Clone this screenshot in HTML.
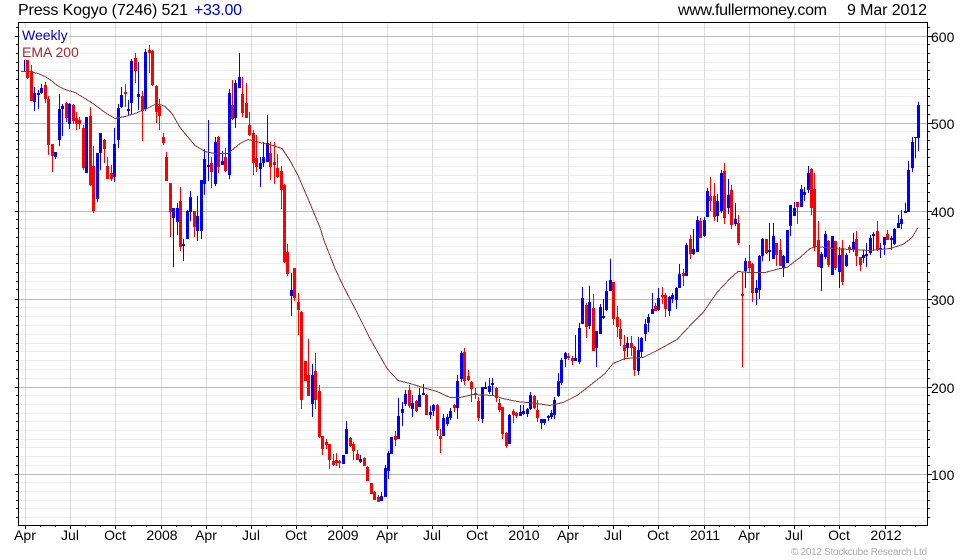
<!DOCTYPE html>
<html><head><meta charset="utf-8"><title>Press Kogyo</title>
<style>
html,body{margin:0;padding:0;background:#fff;width:980px;height:560px;overflow:hidden}
svg{display:block}
text{font-family:"Liberation Sans",Arial,sans-serif;font-size:14px;fill:#000}
.g{shape-rendering:crispEdges;fill:none}
.c{text-anchor:middle}
</style></head><body>
<svg width="980" height="560" viewBox="0 0 980 560">
<rect width="980" height="560" fill="#fff"/>
<path class="g" stroke="#eeeeee" d="M19 27.5H927M19 44.5H927M19 53.5H927M19 62.5H927M19 70.5H927M19 79.5H927M19 88.5H927M19 96.5H927M19 105.5H927M19 114.5H927M19 131.5H927M19 140.5H927M19 149.5H927M19 157.5H927M19 166.5H927M19 175.5H927M19 183.5H927M19 192.5H927M19 201.5H927M19 219.5H927M19 228.5H927M19 237.5H927M19 246.5H927M19 254.5H927M19 263.5H927M19 272.5H927M19 281.5H927M19 289.5H927M19 307.5H927M19 316.5H927M19 325.5H927M19 334.5H927M19 343.5H927M19 351.5H927M19 360.5H927M19 369.5H927M19 378.5H927M19 395.5H927M19 404.5H927M19 413.5H927M19 421.5H927M19 430.5H927M19 439.5H927M19 447.5H927M19 456.5H927M19 465.5H927M19 482.5H927M19 491.5H927M19 500.5H927M19 508.5H927M19 517.5H927"/>
<path class="g" stroke="#dddddd" d="M25.5 23V525M70.5 23V525M115.5 23V525M161.5 23V525M206.5 23V525M251.5 23V525M296.5 23V525M342.5 23V525M387.5 23V525M432.5 23V525M477.5 23V525M523.5 23V525M568.5 23V525M613.5 23V525M658.5 23V525M704.5 23V525M749.5 23V525M794.5 23V525M839.5 23V525M885.5 23V525"/>
<path class="g" stroke="#bbbbbb" d="M19 36.5H927M19 123.5H927M19 211.5H927M19 299.5H927M19 387.5H927M19 474.5H927"/>
<rect x="20" y="28" width="49" height="14" fill="#fff"/>
<rect x="20" y="44" width="59" height="15" fill="#fff"/>
<!-- red wicks -->
<path class="g" stroke="#ff0000" d="M27.5 60V79M31.5 65V101M45.5 82V103M48.5 96V155M52.5 144V172M66.5 102V122M73.5 104V124M76.5 112V130M79.5 117V129M83.5 125V170M90.5 107V186M93.5 146V213M104.5 139V163M107.5 157V179M111.5 165V181M125.5 84V107M135.5 53V83M142.5 91V141M149.5 45V73M152.5 50V86M156.5 85V123M159.5 99V130M163.5 133V145M166.5 152V181M170.5 183V237M180.5 187V251M194.5 211V237M211.5 157V188M218.5 136V173M225.5 148V172M232.5 80V120M242.5 77V117M246.5 83V118M249.5 112V136M253.5 130V175M256.5 135V172M270.5 142V180M274.5 142V184M277.5 154V178M281.5 166V209M284.5 184V263M287.5 244V276M294.5 268V301M298.5 293V335M301.5 311V409M305.5 361V381M308.5 339V396M315.5 353V409M319.5 385V438M322.5 436V455M326.5 439V449M329.5 444V469M333.5 454V466M336.5 453V466M339.5 460V468M350.5 437V447M353.5 442V460M357.5 450V460M364.5 457V466M367.5 466V481M371.5 483V494M374.5 491V500M378.5 495V502M395.5 431V446M409.5 385V408M416.5 400V412M426.5 394V415M437.5 404V436M440.5 429V453M454.5 404V412M464.5 348V385M468.5 370V381M471.5 381V402M475.5 388V399M478.5 397V421M496.5 387V402M499.5 399V412M502.5 407V439M506.5 432V448M513.5 409V423M516.5 412V418M534.5 395V409M537.5 400V422M568.5 353V360M572.5 356V365M586.5 303V338M593.5 294V351M613.5 282V325M617.5 306V337M620.5 319V346M624.5 335V360M631.5 336V356M634.5 346V376M655.5 303V311M662.5 287V304M665.5 293V317M683.5 269V286M690.5 235V259M700.5 218V238M710.5 177V211M714.5 183V221M724.5 163V224M731.5 185V229M738.5 215V245M742.5 272V367M749.5 245V272M752.5 263V302M766.5 239V254M776.5 243V266M780.5 239V266M797.5 202V224M811.5 168V215M814.5 173V251M818.5 221V267M828.5 240V267M835.5 241V270M842.5 240V285M849.5 245V253M856.5 231V266M860.5 257V271M877.5 221V251M887.5 230V240"/>
<!-- red bodies -->
<path class="g" stroke="#ff0000" stroke-width="3" d="M27.5 60V78M31.5 71V101M45.5 85V99M48.5 99V145M52.5 144V156M66.5 103V118M73.5 105V121M76.5 118V124M79.5 120V124M83.5 128V168M90.5 116V185M93.5 166V211M104.5 140V149M107.5 166V179M111.5 173V179M125.5 92V94M135.5 58V71M142.5 96V111M149.5 50V53M152.5 51V85M156.5 86V112M159.5 106V116M163.5 137V143M166.5 157V181M170.5 183V212M180.5 201V247M194.5 211V227M211.5 163V172M218.5 137V167M225.5 157V171M232.5 105V119M242.5 94V113M246.5 103V118M249.5 125V135M253.5 133V163M256.5 158V167M270.5 153V167M274.5 162V165M277.5 168V177M281.5 171V190M284.5 185V262M287.5 252V274M294.5 268V298M298.5 302V310M301.5 312V400M305.5 361V381M308.5 375V396M315.5 371V400M319.5 391V437M322.5 436V449M326.5 442V445M329.5 444V460M333.5 461V465M336.5 460V463M339.5 461V463M350.5 438V446M353.5 444V451M357.5 454V460M364.5 458V466M367.5 467V481M371.5 483V494M374.5 492V500M378.5 497V502M395.5 436V440M409.5 390V406M416.5 401V411M426.5 395V415M437.5 405V430M440.5 436V439M454.5 405V408M464.5 352V381M468.5 376V380M471.5 382V389M475.5 393V394M478.5 401V418M496.5 388V398M499.5 403V410M502.5 407V434M506.5 433V446M513.5 411V415M516.5 413V416M534.5 396V408M537.5 410V418M568.5 356V358M572.5 358V361M586.5 305V327M593.5 308V351M613.5 282V319M617.5 317V327M620.5 329V339M624.5 345V351M631.5 343V348M634.5 347V370M655.5 306V311M662.5 295V297M665.5 295V309M683.5 273V276M690.5 239V254M700.5 221V238M710.5 196V201M714.5 196V217M724.5 171V218M731.5 190V225M738.5 223V243M742.5 294V296M749.5 261V268M752.5 264V293M766.5 239V253M776.5 243V255M780.5 250V266M797.5 202V207M811.5 169V208M814.5 189V247M818.5 240V267M828.5 241V265M835.5 241V268M842.5 248V282M849.5 247V250M856.5 239V256M860.5 257V265M877.5 231V250M887.5 234V240"/>
<!-- blue wicks -->
<path class="g" stroke="#0000ff" d="M24.5 60V71M34.5 87V111M38.5 90V109M41.5 84V94M55.5 152V159M59.5 94V146M62.5 104V136M69.5 103V129M86.5 117V173M97.5 153V202M100.5 133V170M114.5 128V182M118.5 104V148M121.5 87V108M128.5 100V115M131.5 59V114M138.5 62V110M145.5 49V111M173.5 208V267M177.5 203V235M183.5 239V261M187.5 210V239M190.5 191V221M197.5 196V241M201.5 180V239M204.5 149V195M208.5 120V181M215.5 137V186M222.5 151V165M229.5 89V179M235.5 80V128M239.5 53V88M260.5 157V187M263.5 142V167M267.5 115V162M291.5 273V316M312.5 364V417M343.5 455V464M346.5 421V454M360.5 455V463M381.5 492V501M385.5 465V497M388.5 451V479M391.5 437V454M398.5 398V439M402.5 402V426M405.5 390V406M412.5 395V417M419.5 388V407M423.5 384V395M430.5 406V419M433.5 404V416M443.5 414V436M447.5 414V426M450.5 408V420M457.5 375V419M461.5 351V382M482.5 387V423M485.5 382V389M489.5 378V394M492.5 378V395M509.5 414V444M520.5 405V416M523.5 405V415M527.5 408V417M530.5 392V410M541.5 419V429M544.5 419V425M548.5 415V421M551.5 410V419M554.5 397V419M558.5 373V397M561.5 358V385M565.5 352V367M575.5 335V361M579.5 323V364M582.5 287V324M589.5 286V329M596.5 331V367M600.5 304V334M603.5 299V319M606.5 281V311M610.5 259V291M627.5 337V357M638.5 337V375M641.5 337V357M645.5 319V341M648.5 314V332M652.5 293V314M658.5 288V311M669.5 296V316M672.5 293V303M676.5 287V309M679.5 264V288M686.5 243V276M693.5 229V255M697.5 216V252M704.5 217V237M707.5 188V217M717.5 194V222M721.5 170V213M728.5 179V214M735.5 203V226M745.5 258V288M756.5 280V305M759.5 255V299M762.5 238V261M769.5 223V261M773.5 223V259M783.5 255V277M787.5 230V263M790.5 205V236M794.5 202V216M801.5 185V207M804.5 187V201M808.5 166V193M821.5 252V291M825.5 231V259M832.5 236V275M839.5 247V288M846.5 253V267M853.5 233V252M863.5 250V263M866.5 243V267M870.5 235V255M873.5 232V251M880.5 243V258M884.5 237V255M891.5 236V250M894.5 228V245M898.5 215V228M901.5 210V229M905.5 203V213M908.5 161V212M912.5 137V172M915.5 137V158M918.5 102V151"/>
<!-- blue bodies -->
<path class="g" stroke="#0000ff" stroke-width="3" d="M34.5 93V102M38.5 93V95M41.5 88V93M55.5 152V157M59.5 109V140M62.5 106V109M69.5 104V124M86.5 117V173M97.5 153V199M100.5 133V153M114.5 144V177M118.5 108V140M121.5 95V107M128.5 109V111M131.5 61V103M138.5 94V97M145.5 52V109M173.5 208V218M177.5 208V222M183.5 244V246M187.5 211V239M190.5 197V212M197.5 216V231M201.5 180V231M204.5 159V184M208.5 165V167M215.5 142V184M222.5 161V165M229.5 93V175M235.5 83V118M239.5 77V88M260.5 163V169M263.5 157V163M267.5 143V162M291.5 290V296M312.5 375V404M343.5 455V464M346.5 429V454M360.5 459V462M381.5 496V501M385.5 468V497M388.5 453V471M391.5 437V454M398.5 416V439M402.5 409V413M405.5 394V404M412.5 403V409M419.5 395V407M423.5 393V395M430.5 412V415M433.5 405V411M443.5 418V436M447.5 417V424M450.5 411V418M457.5 381V408M461.5 353V379M482.5 387V419M485.5 387V389M489.5 386V392M492.5 383V385M509.5 415V444M520.5 412V416M523.5 411V414M527.5 409V414M530.5 395V409M541.5 419V423M544.5 419V423M548.5 416V418M551.5 413V417M554.5 400V415M558.5 381V396M561.5 360V383M565.5 353V359M575.5 358V361M579.5 328V362M582.5 298V324M589.5 302V326M596.5 331V348M600.5 307V334M603.5 316V318M606.5 291V310M610.5 280V291M627.5 343V348M638.5 350V371M641.5 338V352M645.5 324V334M648.5 317V323M652.5 309V314M658.5 298V310M669.5 297V311M672.5 295V299M676.5 288V300M679.5 274V288M686.5 245V276M693.5 249V254M697.5 220V252M704.5 220V236M707.5 191V217M717.5 201V216M721.5 173V211M728.5 195V208M735.5 219V224M745.5 261V271M756.5 288V293M759.5 256V290M762.5 239V256M769.5 250V252M773.5 236V259M783.5 256V268M787.5 230V263M790.5 205V226M794.5 208V216M801.5 189V207M804.5 192V195M808.5 173V190M821.5 254V268M825.5 234V257M832.5 236V275M839.5 255V272M846.5 255V266M853.5 242V250M863.5 255V258M866.5 254V256M870.5 238V253M873.5 234V236M880.5 248V249M884.5 237V245M891.5 238V240M894.5 229V244M898.5 223V228M901.5 219V224M905.5 211V213M908.5 170V212M912.5 142V168M915.5 137V138M918.5 105V138"/>
<!-- EMA -->
<path fill="none" stroke="#993333" stroke-width="1" shape-rendering="crispEdges" d="M21 71.5L30 71.5L38 73.5L45 76.5L50 79.5L57 85.5L65 89.5L75 92.5L85 98.5L93 103.5L105 112.5L115 118.5L125 116.5L135 113.5L145 109.5L155 104.5L160 104.5L165 106.5L172 113.5L180 127.5L195 145.5L205 151.5L215 153.5L228 153.5L240 143.5L248 139.5L260 142.5L273 145.5L282 148.5L290 160.5L298 175.5L310 203.5L320 227.5L324 240.5L335 268.5L343 285.5L357 312.5L370 338.5L387 368.5L398 380.5L410 383.5L423 387.5L437 391.5L450 397.5L460 397.5L473 394.5L493 395.5L503 398.5L517 401.5L537 403.5L550 405.5L563 402.5L577 395.5L590 385.5L605 373.5L613 363.5L625 358.5L643 357.5L657 350.5L677 339.5L693 322.5L703 312.5L717 292.5L730 278.5L738 271.5L750 272.5L765 272.5L780 268.5L787 267.5L800 257.5L810 248.5L817 246.5L833 248.5L850 249.5L870 250.5L890 248.5L903 244.5L912 237.5L918 227.5"/>
<!-- frame -->
<path class="g" stroke="#000" d="M18.5 22.5H927.5V525.5H18.5Z"/>
<path class="g" stroke="#000" d="M15 36.5h3M15 123.5h3M15 211.5h3M15 299.5h3M15 387.5h3M15 474.5h3M928 36.5h4M928 123.5h4M928 211.5h4M928 299.5h4M928 387.5h4M928 474.5h4"/>
<path class="g" stroke="#000" d="M16 27.5h2M16 44.5h2M16 53.5h2M16 62.5h2M16 70.5h2M16 79.5h2M16 88.5h2M16 96.5h2M16 105.5h2M16 114.5h2M16 131.5h2M16 140.5h2M16 149.5h2M16 157.5h2M16 166.5h2M16 175.5h2M16 183.5h2M16 192.5h2M16 201.5h2M16 219.5h2M16 228.5h2M16 237.5h2M16 246.5h2M16 254.5h2M16 263.5h2M16 272.5h2M16 281.5h2M16 289.5h2M16 307.5h2M16 316.5h2M16 325.5h2M16 334.5h2M16 343.5h2M16 351.5h2M16 360.5h2M16 369.5h2M16 378.5h2M16 395.5h2M16 404.5h2M16 413.5h2M16 421.5h2M16 430.5h2M16 439.5h2M16 447.5h2M16 456.5h2M16 465.5h2M16 482.5h2M16 491.5h2M16 500.5h2M16 508.5h2M16 517.5h2M928 27.5h2M928 44.5h2M928 53.5h2M928 62.5h2M928 70.5h2M928 79.5h2M928 88.5h2M928 96.5h2M928 105.5h2M928 114.5h2M928 131.5h2M928 140.5h2M928 149.5h2M928 157.5h2M928 166.5h2M928 175.5h2M928 183.5h2M928 192.5h2M928 201.5h2M928 219.5h2M928 228.5h2M928 237.5h2M928 246.5h2M928 254.5h2M928 263.5h2M928 272.5h2M928 281.5h2M928 289.5h2M928 307.5h2M928 316.5h2M928 325.5h2M928 334.5h2M928 343.5h2M928 351.5h2M928 360.5h2M928 369.5h2M928 378.5h2M928 395.5h2M928 404.5h2M928 413.5h2M928 421.5h2M928 430.5h2M928 439.5h2M928 447.5h2M928 456.5h2M928 465.5h2M928 482.5h2M928 491.5h2M928 500.5h2M928 508.5h2M928 517.5h2"/>
<path class="g" stroke="#000" d="M25.5 526v3M70.5 526v3M115.5 526v3M161.5 526v3M206.5 526v3M251.5 526v3M296.5 526v3M342.5 526v3M387.5 526v3M432.5 526v3M477.5 526v3M523.5 526v3M568.5 526v3M613.5 526v3M658.5 526v3M704.5 526v3M749.5 526v3M794.5 526v3M839.5 526v3M885.5 526v3M40.5 526v1M55.5 526v1M85.5 526v1M100.5 526v1M131.5 526v1M146.5 526v1M176.5 526v1M191.5 526v1M221.5 526v1M236.5 526v1M266.5 526v1M281.5 526v1M311.5 526v1M327.5 526v1M357.5 526v1M372.5 526v1M402.5 526v1M417.5 526v1M447.5 526v1M462.5 526v1M493.5 526v1M508.5 526v1M538.5 526v1M553.5 526v1M583.5 526v1M598.5 526v1M628.5 526v1M643.5 526v1M673.5 526v1M689.5 526v1M719.5 526v1M734.5 526v1M764.5 526v1M779.5 526v1M809.5 526v1M824.5 526v1M855.5 526v1M870.5 526v1M900.5 526v1M915.5 526v1"/>
<!-- text -->
<text x="18" y="15" textLength="170" style="font-size:16px">Press Kogyo (7246) 521</text>
<text x="194" y="15" textLength="48" style="font-size:16px;fill:#0000c0">+33.00</text>
<text x="678" y="15" textLength="149" style="font-size:16px">www.fullermoney.com</text>
<text x="847" y="15" textLength="80" style="font-size:16px">9 Mar 2012</text>
<text x="22" y="40" style="fill:#0000d0">Weekly</text>
<text x="22" y="57" style="fill:#a52a2a">EMA 200</text>
<text x="931" y="42">600</text><text x="931" y="129">500</text><text x="931" y="217">400</text><text x="931" y="305">300</text><text x="931" y="393">200</text><text x="931" y="480">100</text>
<g class="c">
<text class="c" x="25" y="540">Apr</text><text class="c" x="70" y="540">Jul</text><text class="c" x="115" y="540">Oct</text><text class="c" x="162" y="540">2008</text><text class="c" x="206" y="540">Apr</text><text class="c" x="251" y="540">Jul</text><text class="c" x="296" y="540">Oct</text><text class="c" x="343" y="540">2009</text><text class="c" x="387" y="540">Apr</text><text class="c" x="432" y="540">Jul</text><text class="c" x="477" y="540">Oct</text><text class="c" x="524" y="540">2010</text><text class="c" x="568" y="540">Apr</text><text class="c" x="613" y="540">Jul</text><text class="c" x="658" y="540">Oct</text><text class="c" x="705" y="540">2011</text><text class="c" x="749" y="540">Apr</text><text class="c" x="794" y="540">Jul</text><text class="c" x="839" y="540">Oct</text><text class="c" x="886" y="540">2012</text>
</g>
<text x="791" y="555" textLength="136" style="font-size:10px;fill:#aaaaaa">© 2012 Stockcube Research Ltd</text>
</svg>
</body></html>
